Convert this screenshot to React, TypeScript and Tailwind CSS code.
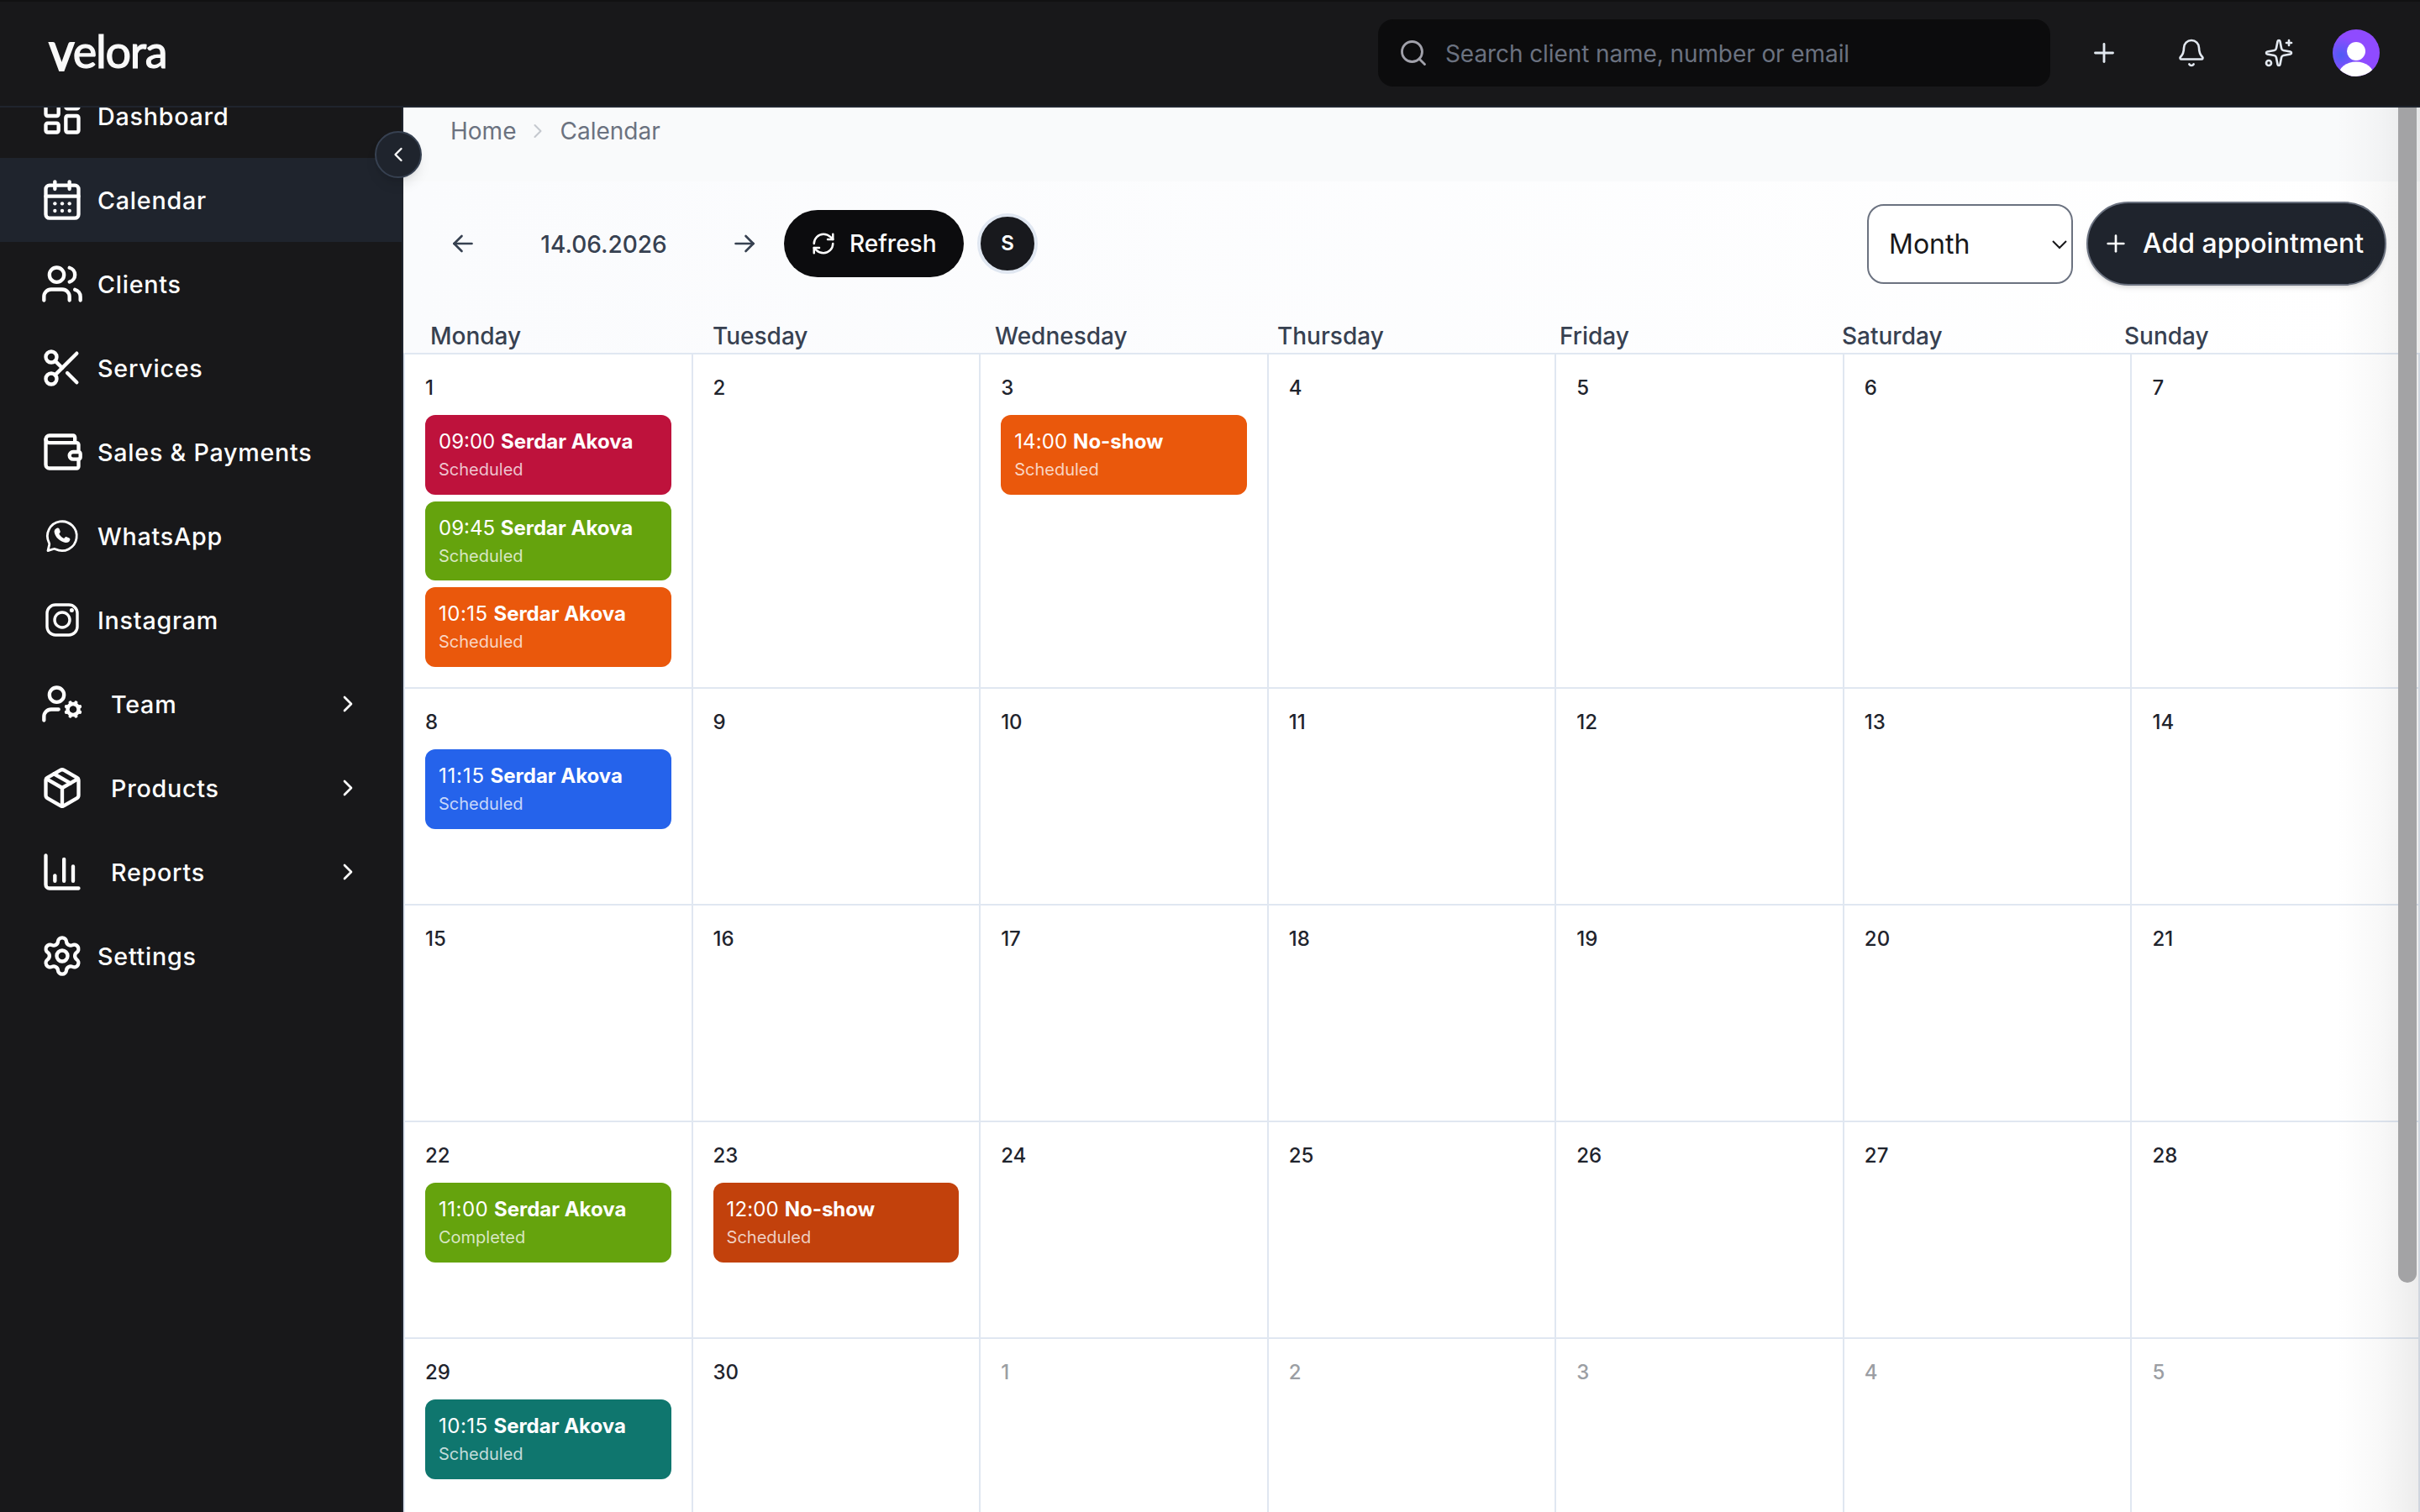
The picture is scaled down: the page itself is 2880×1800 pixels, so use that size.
import {
  Bell,
  CalendarDays,
  ChartColumn,
  ChevronLeft,
  ChevronRight,
  LayoutDashboard,
  Package,
  Plus,
  RefreshCw,
  Scissors,
  Search,
  Settings,
  Sparkles,
  UserCog,
  Users,
  Wallet,
} from 'lucide-react'
import { TbArrowLeft, TbArrowRight } from 'react-icons/tb'
import clsx from 'clsx'
import type { ComponentType } from 'react'

interface IconProps {
  className?: string
}

interface NavEntry {
  label: string
  icon: ComponentType<IconProps>
  active?: boolean
  expandable?: boolean
}

interface Appointment {
  time: string
  client: string
  status: string
  color: string
  tracking?: string
}

interface Day {
  day: number
  muted?: boolean
  appointments?: Appointment[]
}

function WhatsAppIcon({ className }: IconProps) {
  return (
    <svg className={className} viewBox="0 0 52 52" fill="none">
      <path
        d="M9 43.6 10.7 36.4Q11 35.2 10.3 34A17.4 17.4 0 1 1 18 41.7Q17 41.1 15.8 41.5Z"
        stroke="currentColor"
        strokeWidth="2.8"
        strokeLinejoin="round"
      />
      <path
        d="M19.6 16.8c1.2-.6 2.3-.4 2.9.8l1.1 2.6c.3.8.2 1.4-.3 2l-1 1.3c1.4 2.5 3.2 4.3 5.8 5.6l1.5-1.5c.5-.5 1.1-.6 1.7-.4l3 1.3c1 .5 1.3 1.2 1 2.2-.7 2.4-3 3.7-5.5 3.2-6.7-1.3-11.8-6-13.1-12.1-.4-2.1.6-4 2.9-5Z"
        fill="currentColor"
      />
    </svg>
  )
}

function InstagramIcon({ className }: IconProps) {
  return (
    <svg className={className} viewBox="0 0 52 52" fill="none" stroke="currentColor" strokeWidth="3.4">
      <rect x="8" y="8" width="36" height="36" rx="10" />
      <circle cx="26" cy="26" r="9" />
      <circle cx="37.4" cy="14.5" r="2.5" fill="currentColor" stroke="none" />
    </svg>
  )
}

const navigation: NavEntry[] = [
  { label: 'Dashboard', icon: LayoutDashboard },
  { label: 'Calendar', icon: CalendarDays, active: true },
  { label: 'Clients', icon: Users },
  { label: 'Services', icon: Scissors },
  { label: 'Sales & Payments', icon: Wallet },
  { label: 'WhatsApp', icon: WhatsAppIcon },
  { label: 'Instagram', icon: InstagramIcon },
  { label: 'Team', icon: UserCog, expandable: true },
  { label: 'Products', icon: Package, expandable: true },
  { label: 'Reports', icon: ChartColumn, expandable: true },
  { label: 'Settings', icon: Settings },
]

const weekdays = ['Monday', 'Tuesday', 'Wednesday', 'Thursday', 'Friday', 'Saturday', 'Sunday']

// times with several narrow 1s get a little extra tracking
const appointments: Record<number, Appointment[]> = {
  1: [
    { time: '09:00', client: 'Serdar Akova', status: 'Scheduled', color: 'bg-[#be123c]' },
    { time: '09:45', client: 'Serdar Akova', status: 'Scheduled', color: 'bg-[#65a30d]' },
    { time: '10:15', client: 'Serdar Akova', status: 'Scheduled', color: 'bg-[#ea580c]', tracking: 'tracking-[0.5px]' },
  ],
  3: [{ time: '14:00', client: 'No-show', status: 'Scheduled', color: 'bg-[#ea580c]', tracking: 'tracking-[0.15px]' }],
  8: [{ time: '11:15', client: 'Serdar Akova', status: 'Scheduled', color: 'bg-[#2563eb]', tracking: 'tracking-[0.8px]' }],
  22: [{ time: '11:00', client: 'Serdar Akova', status: 'Completed', color: 'bg-[#65a30d]', tracking: 'tracking-[0.5px]' }],
  23: [{ time: '12:00', client: 'No-show', status: 'Scheduled', color: 'bg-[#c2410c]', tracking: 'tracking-[0.15px]' }],
  29: [{ time: '10:15', client: 'Serdar Akova', status: 'Scheduled', color: 'bg-[#0f766e]', tracking: 'tracking-[0.5px]' }],
}

// five weeks: 1-30 June, then the first days of July
const days: Day[] = Array.from({ length: 35 }, (_, i) =>
  i < 30 ? { day: i + 1, appointments: appointments[i + 1] } : { day: i - 29, muted: true },
)

function Header() {
  return (
    <header className="z-20 flex h-32 shrink-0 items-center justify-between border-b-2 border-[#1f242d] bg-[#18181a] pr-12 pl-[58px] shadow-[inset_0_2px_0_#111112]">
      <div className="-mt-1 font-['Lato',sans-serif] text-[54px] leading-none tracking-[-1.3px] text-[#f9f9f9] [-webkit-text-stroke:1.2px_#f9f9f9]">
        <span className="relative top-[3px] -mr-1 inline-block origin-left scale-x-90 text-[66px] leading-[0] [-webkit-text-stroke:2px_#f9f9f9]">
          v
        </span>
        elora
      </div>
      <div className="flex items-center gap-6">
        <div className="flex h-20 w-[800px] items-center gap-5 rounded-[18px] bg-[#0c0c0d] px-6">
          <Search className="size-9 text-[#a1a1aa]" strokeWidth={1.9} />
          <span className="pt-px text-[28px] tracking-[-0.09px] text-[#6b7280]">
            Search client name, number or email
          </span>
        </div>
        <button className="flex size-20 items-center justify-center text-[#e2e8f0]">
          <Plus className="size-9" strokeWidth={1.9} />
        </button>
        <button className="flex size-20 items-center justify-center text-[#e2e8f0]">
          <Bell className="size-9" strokeWidth={1.75} />
        </button>
        <button className="flex size-20 items-center justify-center text-[#e2e8f0]">
          <Sparkles className="size-9" strokeWidth={1.75} />
        </button>
        <svg className="size-14 rounded-full" viewBox="0 0 56 56">
          <defs>
            <radialGradient id="avatar" cx="0.18" cy="0.55" r="0.4">
              <stop offset="0" stopColor="#4f5bf5" />
              <stop offset="1" stopColor="#8f4bff" />
            </radialGradient>
          </defs>
          <rect width="56" height="56" fill="url(#avatar)" />
          <circle cx="28" cy="26" r="11" fill="#fff" />
          <ellipse cx="28" cy="55" rx="21" ry="16.5" fill="#fff" />
        </svg>
      </div>
    </header>
  )
}

function Sidebar() {
  return (
    <aside className="relative z-10 w-[480px] shrink-0 border-r-2 border-[#1f242d] bg-[#18181a]">
      <div className="h-full overflow-hidden">
        <nav className="-mt-10 flex flex-col">
          {navigation.map(({ label, icon: Icon, active, expandable }) => (
            <a
              key={label}
              className={clsx(
                'flex h-[100px] items-center pr-12 pl-12 text-[28.7px] font-medium tracking-[0.75px] text-white',
                expandable ? 'gap-8' : 'gap-4',
                active && 'bg-[#1f242d]',
              )}
            >
              <Icon className="size-[52px] shrink-0" />
              <span className="flex-1 pt-px">{label}</span>
              {expandable && <ChevronRight className="size-8" />}
            </a>
          ))}
        </nav>
      </div>
      <button className="absolute top-7 -right-6 flex size-14 items-center justify-center rounded-full border-2 border-[#374151] bg-[#1f242d] text-white shadow-lg">
        <ChevronLeft className="size-7" />
      </button>
    </aside>
  )
}

function Toolbar() {
  return (
    <div className="flex h-[148px] shrink-0 items-center pr-10 pl-[53px] text-[#374151]">
      <TbArrowLeft className="size-9" strokeWidth={1.75} />
      <div className="w-[299px] pt-px text-center text-[28px] font-medium">14.06.2026</div>
      <TbArrowRight className="size-9" strokeWidth={1.75} />
      <button className="ml-[29px] flex h-20 w-[214px] items-center gap-4 rounded-full bg-[#0c0c0e] pl-8 text-[28px] font-medium text-white">
        <RefreshCw className="size-[30px]" strokeWidth={2} />
        Refresh
      </button>
      <div className="ml-4 flex size-[72px] items-center justify-center rounded-full border-4 border-[#e0e7f1] bg-[#18191d] text-2xl font-semibold text-white">
        S
      </div>
      <div className="ml-auto flex items-center gap-4">
        <div className="mt-px flex h-[95px] w-[245px] items-center justify-between rounded-[20px] border-2 border-[#6b7280] bg-white pr-1 pl-6 text-[32px] text-[#18181a]">
          Month
          <svg className="h-3 w-5" viewBox="0 0 20 12" fill="none" stroke="currentColor" strokeWidth="2">
            <path d="m2 2 8 8 8-8" />
          </svg>
        </div>
        <button className="flex h-[100px] w-[357px] items-center gap-4 rounded-full border-2 border-[#6b7280] bg-[#1f242d] pl-[17px] text-[32px] font-medium whitespace-nowrap text-white shadow-md">
          <Plus className="size-8" strokeWidth={2} />
          Add appointment
        </button>
      </div>
    </div>
  )
}

function AppointmentCard({ time, client, status, color, tracking }: Appointment) {
  return (
    <div className={clsx('rounded-xl px-4 py-[14.25px] text-white', color)}>
      <div className="text-2xl leading-9">
        <span className={tracking}>{time}</span> <span className="font-bold">{client}</span>
      </div>
      <div className="text-xl leading-[30px] text-white/75">{status}</div>
    </div>
  )
}

function MonthGrid() {
  return (
    <div className="grid shrink-0 auto-rows-[258px] grid-cols-7 grid-rows-[398px] border-t-2 border-l-2 border-[#e0e7f1] bg-white">
      {days.map(({ day, muted, appointments: items }, i) => (
        <div key={i} className="border-r-2 border-b-2 border-[#e0e7f1] px-6 pt-[22px]">
          <div className={clsx('text-2xl leading-9 font-medium', muted ? 'text-[#9b9ea3]' : 'text-[#1f242d]')}>
            {day}
          </div>
          {items && (
            <div className="mt-3.5 flex flex-col gap-2">
              {items.map((item) => (
                <AppointmentCard key={item.time} {...item} />
              ))}
            </div>
          )}
        </div>
      ))}
    </div>
  )
}

export default function App() {
  return (
    <div className="relative flex h-screen w-full flex-col overflow-hidden bg-white font-['Inter',sans-serif]">
      <Header />
      <div className="flex min-h-0 flex-1">
        <Sidebar />
        <main className="flex min-w-0 flex-1 flex-col overflow-hidden bg-gradient-to-r from-[#fafbfd] to-white">
          <div className="flex h-[88px] shrink-0 items-start bg-[#f9fafb] pt-[7px] pl-14 text-[28px] text-[#6b7280]">
            <span>Home</span>
            <ChevronRight className="mt-[7px] mr-3 ml-3 size-7 text-[#c4c8ce]" strokeWidth={1.75} />
            <span>Calendar</span>
          </div>
          <Toolbar />
          <div className="grid h-14 shrink-0 grid-cols-7 px-6 pt-[15px] text-[28px] leading-[42px] font-medium text-[#374151]">
            {weekdays.map((name) => (
              <div key={name} className="pl-2">
                {name}
              </div>
            ))}
          </div>
          <MonthGrid />
        </main>
      </div>
      {/* page scrollbar with the edge shade under it */}
      <div className="pointer-events-none absolute top-32 right-0 bottom-0 w-[100px] bg-gradient-to-r from-black/0 via-black/[0.025] to-black/[0.075]" />
      <div className="absolute top-32 right-1 h-[1399px] w-[22px] rounded-b-full bg-[#a3a3a5]" />
    </div>
  )
}
